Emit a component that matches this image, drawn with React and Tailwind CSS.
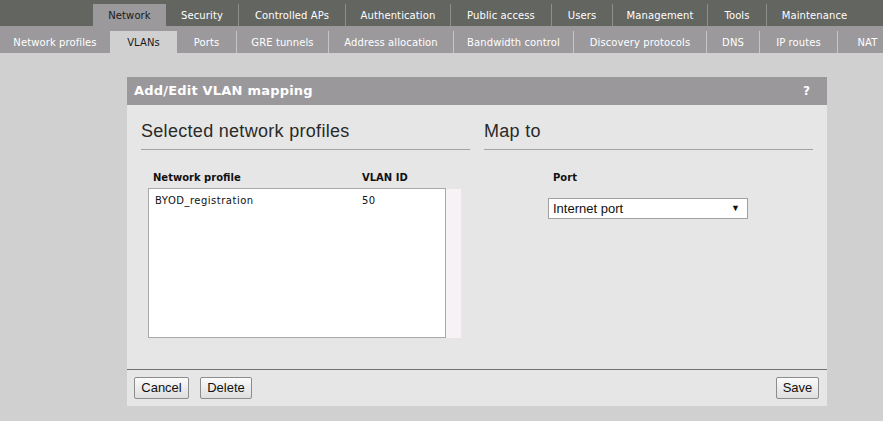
import React from 'react';

const TOP_TABS = [
  { label: 'Network', w: 'w-[73px]', active: true },
  { label: 'Security', w: 'w-[72px]' },
  { label: 'Controlled APs', w: 'w-[107px]' },
  { label: 'Authentication', w: 'w-[105px]' },
  { label: 'Public access', w: 'w-[101px]' },
  { label: 'Users', w: 'w-[61px]' },
  { label: 'Management', w: 'w-[95px]' },
  { label: 'Tools', w: 'w-[59px]' },
  { label: 'Maintenance', w: 'w-[96px]' },
];

const SUB_TABS = [
  { label: 'Network profiles', w: 'w-[110px]' },
  { label: 'VLANs', w: 'w-[67px]', active: true },
  { label: 'Ports', w: 'w-[59px]' },
  { label: 'GRE tunnels', w: 'w-[92px]' },
  { label: 'Address allocation', w: 'w-[125px]' },
  { label: 'Bandwidth control', w: 'w-[120px]' },
  { label: 'Discovery protocols', w: 'w-[133px]' },
  { label: 'DNS', w: 'w-[53px]' },
  { label: 'IP routes', w: 'w-[78px]' },
  { label: 'NAT', w: 'w-[60px]' },
];

const Button = ({ children, className = '' }) => (
  <button className={`h-[22px] border border-[#8c8c8c] rounded-[2px] bg-gradient-to-b from-[#fbfbfb] to-[#dedede] text-[13px] text-[#111] font-['Liberation_Sans',Arial,sans-serif] ${className}`}>
    {children}
  </button>
);

export default function App() {
  return (
    <div className="w-full h-[421px] overflow-hidden bg-[#d0d0d0] font-['DejaVu_Sans',Verdana,sans-serif]">
      {/* main nav */}
      <div className="h-[26px] bg-[#636561] flex items-end pl-[93px]">
        {TOP_TABS.map((t, i) => (
          <div
            key={t.label}
            className={`${t.w} h-[22px] shrink-0 flex items-center justify-center text-[10px] tracking-[0.1px] ${
              t.active ? 'bg-[#9b999c] text-[#1a1a1a]' : 'text-white'
            } ${i > 1 ? 'border-l border-[#8e8f8c]' : ''}`}
          >
            {t.label}
          </div>
        ))}
      </div>

      {/* sub nav */}
      <div className="h-[27px] bg-[#9b999c] flex items-end">
        {SUB_TABS.map((t, i) => (
          <div
            key={t.label}
            className={`${t.w} h-[22px] shrink-0 flex items-center justify-center text-[10px] tracking-[0.1px] ${
              t.active ? 'bg-[#d0d0d0] text-[#1a1a1a]' : 'text-white'
            } ${i > 2 ? 'border-l border-[#c6c5c7]' : ''}`}
          >
            {t.label}
          </div>
        ))}
      </div>

      {/* dialog */}
      <div className="ml-[127px] mt-[24px] w-[700px] bg-[#e6e6e6]">
        <div className="h-[28px] bg-[#9a989b] flex items-center justify-between pl-[7px] pr-[17px]">
          <span className="text-white font-bold text-[13px] tracking-[0.2px]">Add/Edit VLAN mapping</span>
          <span className="text-white font-bold text-[12px]">?</span>
        </div>

        <div className="h-[264px] flex gap-[14px] px-[14px] pt-[12px]">
          {/* left column */}
          <div className="w-[329px]">
            <div className="h-[33px] border-b border-[#a3a3a3] font-['Liberation_Sans',Arial,sans-serif] text-[18px] tracking-[0.3px] leading-[28px] text-[#2a2a2a]">
              Selected network profiles
            </div>
            <div className="mt-[20px] h-[16px] flex text-[10px] font-bold text-[#111] pl-[12px]">
              <span className="w-[209px]">Network profile</span>
              <span>VLAN ID</span>
            </div>
            <div className="mt-[2px] ml-[7px] flex">
              <div className="w-[298px] h-[150px] bg-white border border-[#a9a9a9]">
                <div className="flex pl-[6px] pt-[4px] text-[10px] tracking-[0.5px] text-[#111]">
                  <span className="w-[207px]">BYOD_registration</span>
                  <span>50</span>
                </div>
              </div>
              <div className="w-[15px] h-[149px] mt-px bg-[#f7f2f5]" />
            </div>
          </div>

          {/* right column */}
          <div className="w-[329px]">
            <div className="h-[33px] border-b border-[#a3a3a3] font-['Liberation_Sans',Arial,sans-serif] text-[18px] tracking-[0.3px] leading-[28px] text-[#2a2a2a]">
              Map to
            </div>
            <div className="mt-[20px] h-[16px] pl-[69px] text-[10px] font-bold text-[#111]">Port</div>
            <div className="mt-[12px] ml-[64px] w-[200px] h-[21px] bg-white border border-[#a0a0a0] flex items-center justify-between pl-[4px] pr-[7px] font-['Liberation_Sans',Arial,sans-serif] text-[13px] text-[#111]">
              <span>Internet port</span>
              <span className="text-[9px]">▼</span>
            </div>
          </div>
        </div>

        {/* footer */}
        <div className="h-[37px] border-t border-[#707070] flex items-start justify-between pt-[7px] pl-[7px] pr-[8px]">
          <div className="flex gap-[11px]">
            <Button className="w-[55px]">Cancel</Button>
            <Button className="w-[52px]">Delete</Button>
          </div>
          <Button className="w-[43px]">Save</Button>
        </div>
      </div>
    </div>
  );
}
